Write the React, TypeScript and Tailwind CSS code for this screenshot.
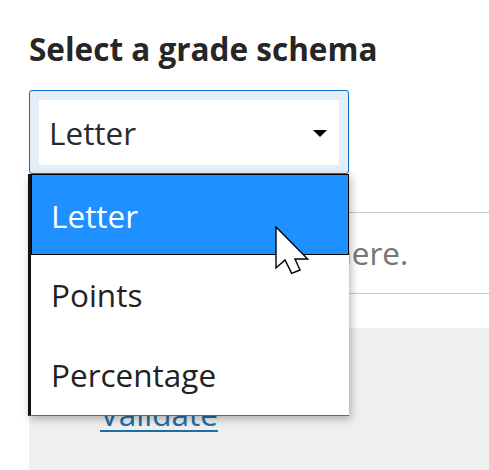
import React from "react";

export default function App() {
  return (
    <div className="relative w-[489px] h-[470px] overflow-hidden bg-white font-['Open_Sans',sans-serif] text-[#222]">
      <div className="pl-[29px] pt-[27px]">
        <h1 className="text-[31.5px] leading-[44px] font-bold text-[#262626]">Select a grade schema</h1>

        <div className="relative mt-[19px] w-[320px]">
          <div className="rounded-[3px] border border-[#0b6fc8] bg-[#e4eef8] pt-[9px] pb-[8px] px-[9px]">
            <div className="flex h-[65px] items-center justify-between bg-white pl-[10px] pr-[12px]">
              <span className="text-[31.5px] leading-[65px] text-[#2a2a2a]">Letter</span>
              <svg width="14" height="7" viewBox="0 0 14 7" className="mt-[1px]">
                <polygon points="0,0 14,0 7,7" fill="#000" />
              </svg>
            </div>
          </div>

          <ul className="absolute left-[-1px] top-full z-10 w-[321px] border-l-[3px] border-b border-l-[#111] border-b-[#666] bg-white shadow-[2px_3px_8px_rgba(0,0,0,0.28)]">
            <li className="flex h-[81px] items-center border border-black bg-[#1e90ff] pl-[19px] pt-[2px] text-[31.5px] leading-[44px] text-white">
              Letter
            </li>
            <li className="flex h-[80px] items-center pl-[20px] text-[31.5px] leading-[44px] text-[#222]">Points</li>
            <li className="flex h-[80px] items-center pl-[20px] text-[31.5px] leading-[44px] text-[#222]">Percentage</li>
          </ul>
        </div>

        <div className="mt-[38px] flex h-[82px] items-center border-y-[1.5px] border-[#c8c8c8] pl-[23px] whitespace-nowrap">
          <span className="text-[31.5px] leading-[44px] text-[#767676]">Add schema name here.</span>
        </div>

        <div className="mt-[34px] h-[200px] bg-[#efefef] pl-[71px] pt-[64px]">
          <a href="#" className="text-[31.5px] leading-[44px] text-[#1d6fa3] underline decoration-2 underline-offset-[4px]">
            Validate
          </a>
        </div>
      </div>

      <svg
        className="absolute left-[275px] top-[226px] z-20"
        width="36"
        height="52"
        viewBox="-1 -1 36 52"
      >
        <polygon
          points="0,0 0,41 9,33 15.7,46.3 24,43 19,32 31.7,32"
          fill="#fff"
          stroke="#000"
          strokeWidth="1.4"
          strokeLinejoin="miter"
        />
      </svg>
    </div>
  );
}
